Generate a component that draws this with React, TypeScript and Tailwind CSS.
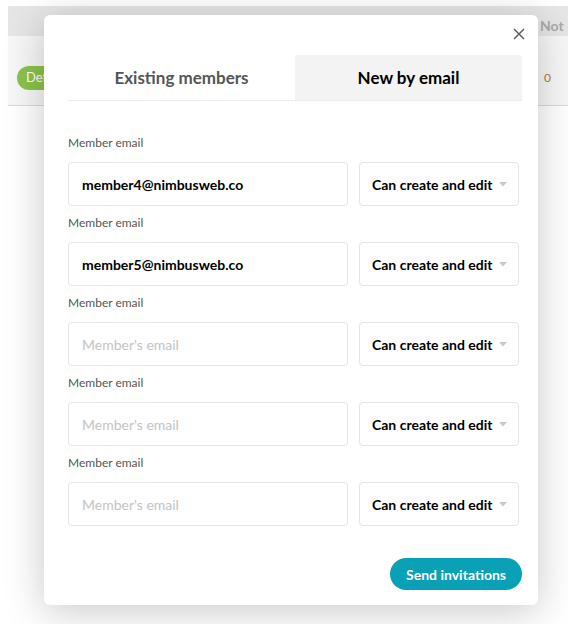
import React from "react";

const font = { fontFamily: "Lato, 'Open Sans', sans-serif" };

function Row({ value }: { value?: string }) {
  return (
    <div className="flex flex-col">
      <div className="text-[12px] leading-[20px] text-[#555]">Member email</div>
      <div className="mt-[9px] flex gap-[11px]">
        <div className="flex h-[44px] w-[280px] items-center rounded-[4px] border border-[#e4e4e4] px-[13px]">
          {value ? (
            <span className="text-[14px] font-bold text-black">{value}</span>
          ) : (
            <span className="text-[14px] text-[#c4c4c4]">Member's email</span>
          )}
        </div>
        <div className="flex h-[44px] w-[160px] items-center justify-between rounded-[4px] border border-[#e4e4e4] pl-[12px] pr-[11px]">
          <span className="text-[14px] font-bold text-black">Can create and edit</span>
          <svg width="8" height="5" viewBox="0 0 8 5">
            <path d="M0 0 L8 0 L4 4.5 Z" fill="#c8c8c8" />
          </svg>
        </div>
      </div>
      <div className="h-[7px]" />
    </div>
  );
}

export default function App() {
  return (
    <div className="relative h-[624px] w-[568px] overflow-hidden bg-white" style={font}>
      <div className="ml-[8px] mt-[6px] h-[616px] w-[600px] bg-white">
        <div className="relative h-[30px] bg-[#e6e6e6]">
          <span className="absolute left-[532px] top-[9px] text-[14px] font-bold text-[#aaa]">Not</span>
        </div>
        <div className="relative h-[70px] border-b border-[#d8d8d8] bg-[#f7f7f7]">
          <span className="absolute left-[9px] top-[30px] rounded-full bg-[#8bc34a] px-[9px] py-[2px] text-[13px] text-white">
            Default
          </span>
          <span className="absolute left-[536px] top-[33px] text-[12px] text-[#b07a3a]">0</span>
        </div>
      </div>

      <div className="absolute left-[44px] top-[15px] flex h-[590px] w-[494px] flex-col rounded-[6px] bg-white pl-[24px] pr-[16px] shadow-[0_6px_40px_rgba(0,0,0,0.22)]">
        <div className="-mr-[3px] flex h-[40px] justify-end pt-[13px]">
          <svg width="12" height="12" viewBox="0 0 12 12">
            <path d="M1 1 L11 11 M11 1 L1 11" stroke="#555" strokeWidth="1.4" />
          </svg>
        </div>
        <div className="flex h-[46px] border-b border-[#ececec]">
          <div className="flex flex-1 items-center justify-center pt-[1px] text-[17px] font-bold text-[#555]">
            Existing members
          </div>
          <div className="flex flex-1 items-center justify-center rounded-t-[3px] bg-[#f3f3f3] pt-[1px] text-[17px] font-bold text-black">
            New by email
          </div>
        </div>
        <div className="mt-[32px] flex flex-col">
          <Row value="member4@nimbusweb.co" />
          <Row value="member5@nimbusweb.co" />
          <Row />
          <Row />
          <Row />
        </div>
        <div className="mt-[25px] flex justify-end">
          <div className="flex h-[32px] items-center rounded-full bg-[#0aa0b5] px-[16px] text-[14px] font-bold text-white">
            Send invitations
          </div>
        </div>
      </div>
    </div>
  );
}
